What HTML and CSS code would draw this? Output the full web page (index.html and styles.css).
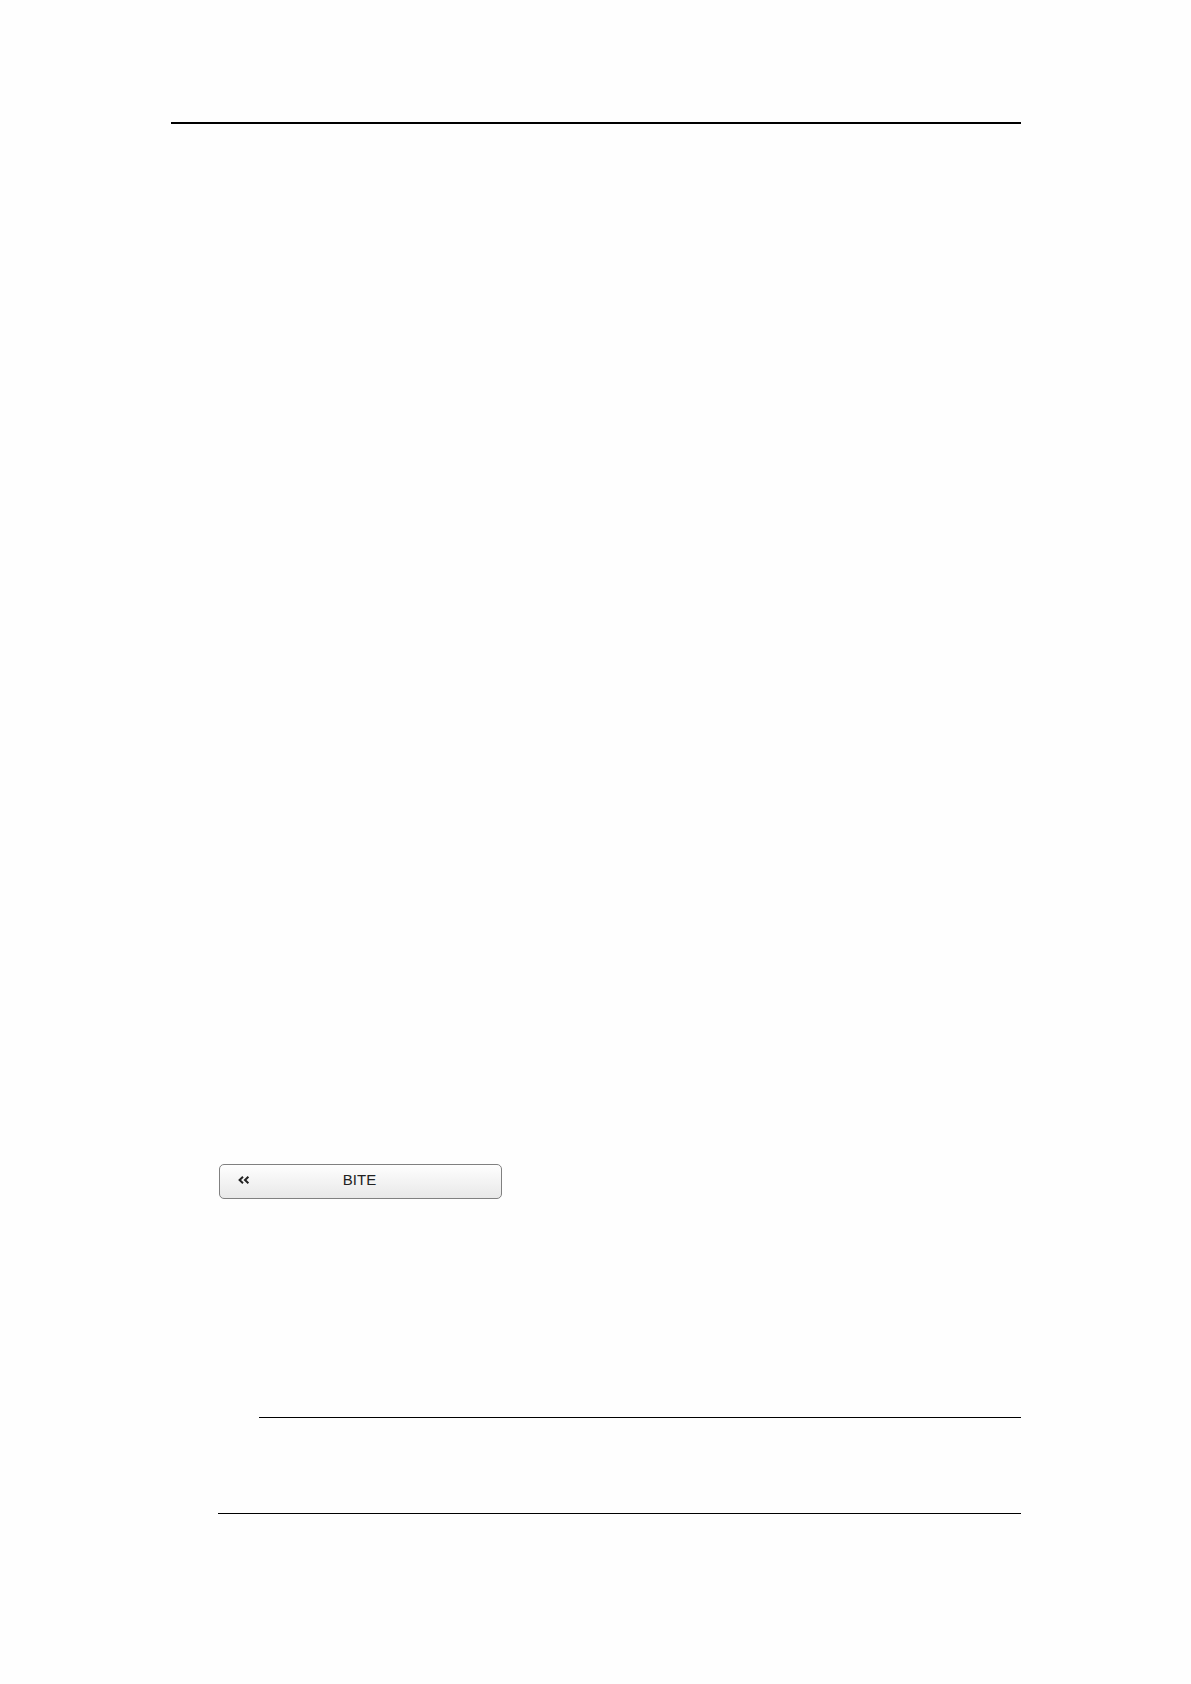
FILE: index.html
```
<!DOCTYPE html>
<html lang="en">
<head>
  <meta charset="UTF-8">
  <meta name="viewport" content="width=device-width, initial-scale=1.0">
  <title>BITE</title>
  <link rel="stylesheet" href="styles.css">
</head>
<body>
  <main class="page">
    <hr class="rule rule-top">
    <section class="content">
      <button class="menu-button" type="button">
        <svg class="chevrons" width="12" height="8" viewBox="0 0 12 8" aria-hidden="true">
          <path d="M5 .8 L1.6 4 L5 7.2 M10.4 .8 L7 4 L10.4 7.2"/>
        </svg>
        <span>BITE</span>
      </button>
      <hr class="rule rule-note">
      <hr class="rule">
    </section>
  </main>
</body>
</html>
```
FILE: styles.css
```
body {
  margin: 0;
  background-color: #fefefe;
  font-family: "Liberation Sans", Arial, sans-serif;
}
.page {
  padding: 122px 170px 170px 171px;
}
.rule {
  margin: 0;
  border: none;
  border-top: 1px solid #000;
}
.rule-top {
  border-top-width: 2px;
}
.content {
  margin-left: 47px;
  padding-top: 1040px;
}
.menu-button {
  display: grid;
  grid-template-columns: 20px 1fr 20px;
  align-items: center;
  width: 283px;
  height: 35px;
  margin: 0 0 218px 1px;
  padding: 0 20px 4px 18px;
  border: 1px solid #808080;
  border-radius: 5px;
  background: linear-gradient(#fefefe, #e8e8e8);
  color: #222;
  font-family: inherit;
  font-size: 15px;
  line-height: 18px;
  cursor: pointer;
}
.chevrons {
  fill: none;
  stroke: #222;
  stroke-width: 2;
}
.rule-note {
  margin-left: 41px;
  margin-bottom: 95px;
}
```
